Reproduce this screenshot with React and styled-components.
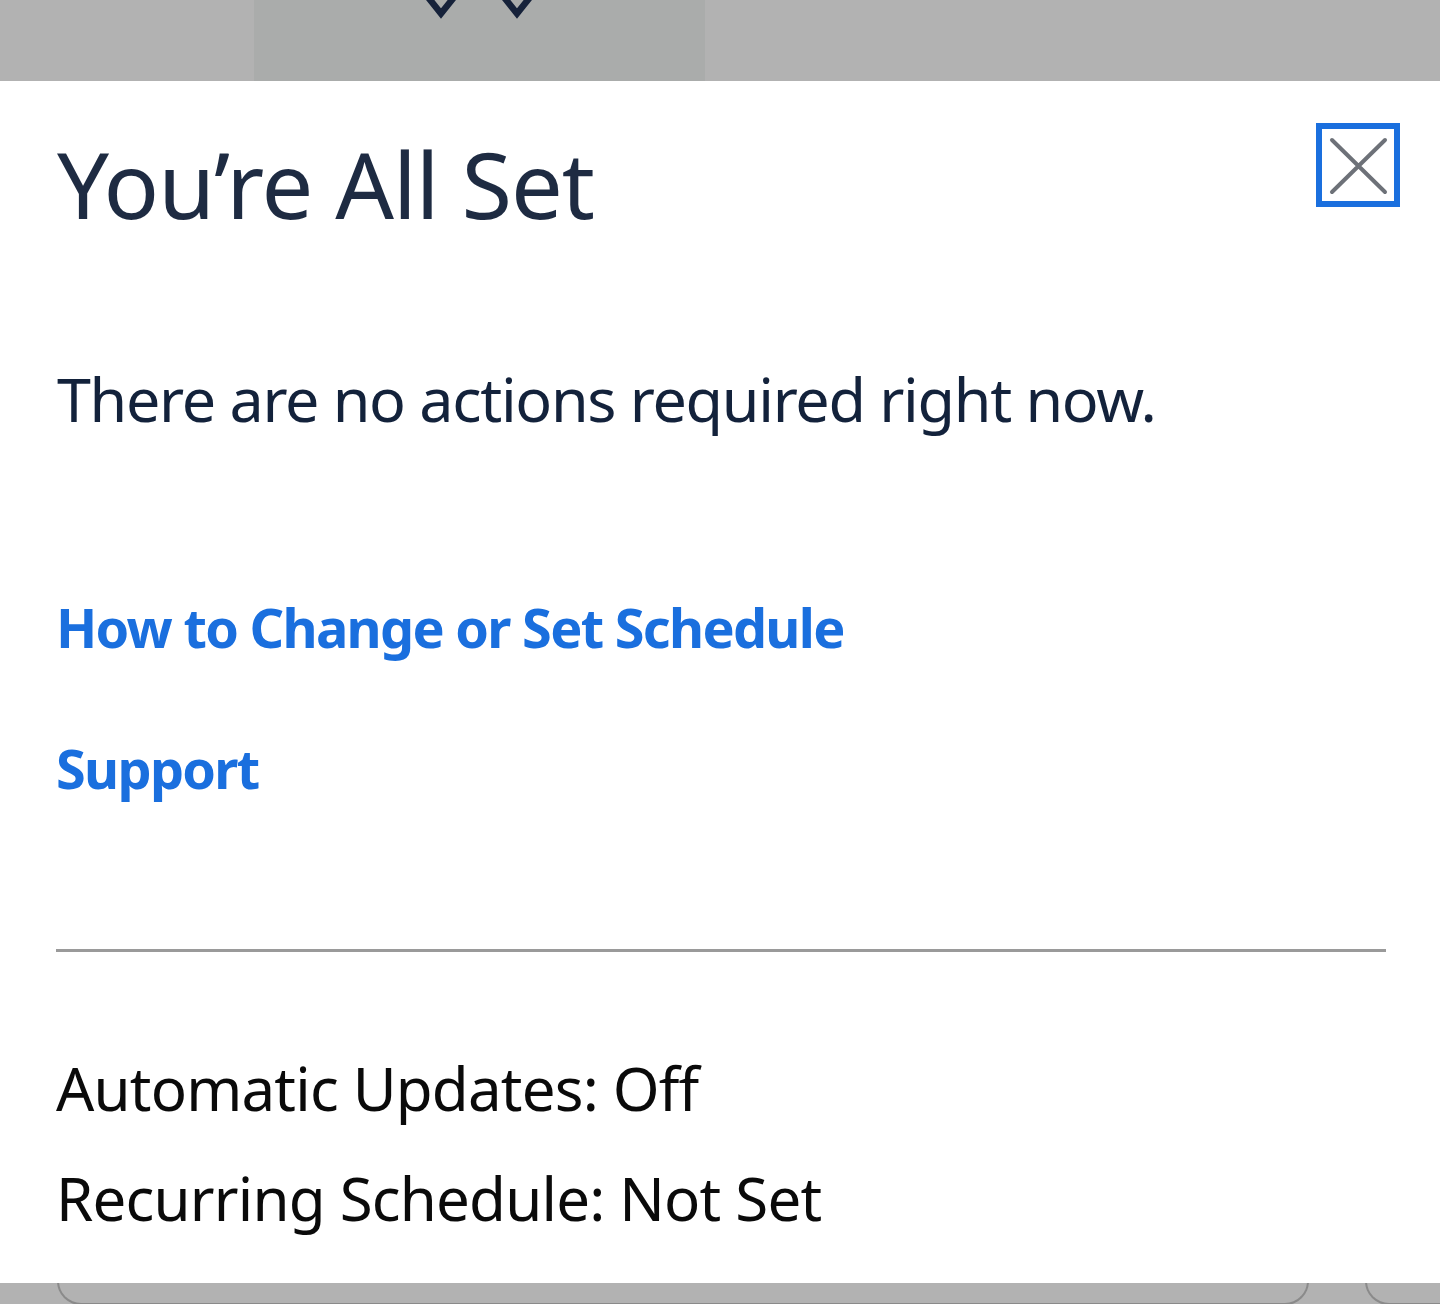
import React from "react";
import styled, { createGlobalStyle } from "styled-components";

const Global = createGlobalStyle`
  html, body { margin: 0; padding: 0; background: #b2b2b2; }
  body { font-family: "Noto Sans", "Open Sans", sans-serif; }
  * { box-sizing: border-box; }
`;

const Page = styled.div`
  width: 1440px;
  height: 1304px;
  display: flex;
  flex-direction: column;
  overflow: hidden;
`;

const TopBar = styled.div`
  height: 81px;
  flex: none;
  background: #b2b2b2;
  display: flex;
`;

const TopPanel = styled.div`
  margin-left: 254px;
  width: 451px;
  height: 100%;
  background: #aaacab;
  display: flex;
  align-items: flex-start;
  padding-left: 171px;
  gap: 44px;
`;

const Chevron = () => (
  <svg width="32" height="19" viewBox="0 0 32 19">
    <path d="M2 -4 L16 13.5 L30 -4" fill="none" stroke="#16223a" strokeWidth="6.5" strokeLinejoin="miter" />
  </svg>
);

const Modal = styled.div`
  flex: 1;
  background: #ffffff;
  padding: 42px 54px 0 56px;
  display: flex;
  flex-direction: column;
`;

const Header = styled.div`
  display: flex;
  justify-content: space-between;
  align-items: flex-start;
`;

const Title = styled.h1`
  margin: 6px 0 0 1px;
  font-size: 92px;
  line-height: 110px;
  font-weight: 400;
  color: #1e2b42;
  letter-spacing: -1px;
`;

const CloseButton = styled.button`
  width: 84px;
  height: 84px;
  margin-right: -14px;
  border: 6px solid #1a6fde;
  background: #fff;
  padding: 0;
  display: flex;
  align-items: center;
  justify-content: center;
  cursor: pointer;
`;

const Message = styled.p`
  margin: 120px 0 0 1px;
  font-size: 61px;
  line-height: 80px;
  color: #13223b;
  letter-spacing: -1.3px;
`;

const Link = styled.a`
  display: block;
  margin: ${(p) => p.$gap}px 0 0 0;
  font-size: 54px;
  line-height: 70px;
  font-weight: 700;
  color: #1a6fde;
  text-decoration: none;
  letter-spacing: -1.7px;
`;

const Divider = styled.hr`
  margin: 146px 0 0 0;
  border: none;
  height: 3px;
  background: #9a9a9a;
`;

const Status = styled.p`
  margin: ${(p) => p.$gap}px 0 0 0;
  font-size: 60px;
  line-height: 80px;
  color: #0a0a0a;
  letter-spacing: -0.8px;
`;

const BottomStrip = styled.div`
  height: 21px;
  flex: none;
  background: #b2b2b2;
  display: flex;
  overflow: hidden;
`;

const CardEdge = styled.div`
  margin-left: ${(p) => p.$left}px;
  width: ${(p) => p.$width}px;
  flex: none;
  height: 24px;
  margin-top: -2px;
  border: 2px solid #8a8a8a;
  border-top: none;
  border-radius: 0 0 24px 24px;
`;

export default function App() {
  return (
    <>
      <Global />
      <Page>
        <TopBar>
          <TopPanel>
            <Chevron />
            <Chevron />
          </TopPanel>
        </TopBar>
        <Modal>
          <Header>
            <Title>You’re All Set</Title>
            <CloseButton aria-label="Close">
              <svg width="72" height="72" viewBox="0 0 72 72">
                <path d="M10 11 L63 63 M63 11 L10 63" stroke="#6d7178" strokeWidth="4" strokeLinecap="round" />
              </svg>
            </CloseButton>
          </Header>
          <Message>There are no actions required right now.</Message>
          <Link href="#" $gap={153}>How to Change or Set Schedule</Link>
          <Link href="#" $gap={71}>Support</Link>
          <Divider />
          <Status $gap={96}>Automatic Updates: Off</Status>
          <Status $gap={30}>Recurring Schedule: Not Set</Status>
        </Modal>
        <BottomStrip>
          <CardEdge $left={57} $width={1252} />
          <CardEdge $left={56} $width={200} />
        </BottomStrip>
      </Page>
    </>
  );
}
